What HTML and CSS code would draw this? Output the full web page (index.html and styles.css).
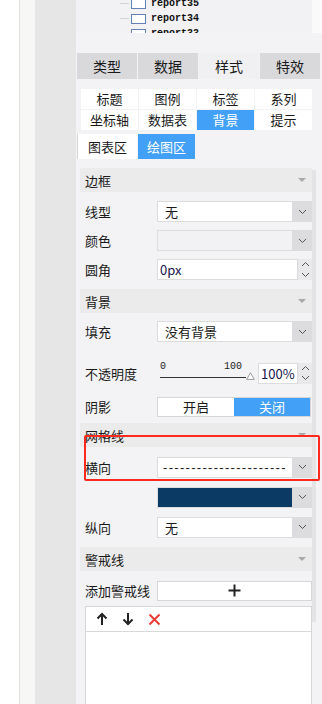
FILE: index.html
```html
<!DOCTYPE html>
<html lang="zh">
<head>
  <meta charset="UTF-8" />
  <title>图表样式</title>
  <link rel="stylesheet" href="styles.css">
</head>
<body>

  <div class="app">
    <div class="rail-a"></div>
    <div class="rail-b"></div>
    <div class="rail-c"></div>

    <div class="panel">
      <!-- report tree -->
      <div class="tree-wrap">
        <div class="tree">
          <div class="tree-item"><span class="tree-line"></span><span class="tree-icon"></span>report35</div>
          <div class="tree-item"><span class="tree-line"></span><span class="tree-icon"></span>report34</div>
          <div class="tree-item"><span class="tree-line"></span><span class="tree-icon"></span>report33</div>
        </div>
      </div>

      <!-- main tabs -->
      <div class="tabs">
        <div class="tab">类型</div>
        <div class="tab">数据</div>
        <div class="tab active">样式</div>
        <div class="tab">特效</div>
      </div>

      <div class="subtabs">
        <div class="subtab">标题</div>
        <div class="subtab">图例</div>
        <div class="subtab">标签</div>
        <div class="subtab">系列</div>
        <div class="subtab">坐标轴</div>
        <div class="subtab">数据表</div>
        <div class="subtab active">背景</div>
        <div class="subtab">提示</div>
      </div>

      <div class="areatabs">
        <div class="areatab first">图表区</div>
        <div class="areatab active">绘图区</div>
      </div>

      <div class="scroller">
        <div class="sections">

          <!-- 边框 -->
          <div class="sec-head">边框<span class="caret"></span></div>
          <div class="sec-body">
            <div class="row">
              <div class="label">线型</div>
              <div class="select">
                <div class="value">无</div>
                <div class="arrow"><svg width="9" height="6" viewBox="0 0 9 6"><path d="M1 1l3.5 3.5L8 1" fill="none" stroke="#555" stroke-width="1"/></svg></div>
              </div>
            </div>
            <div class="row">
              <div class="label">颜色</div>
              <div class="select disabled">
                <div class="value"></div>
                <div class="arrow"><svg width="9" height="6" viewBox="0 0 9 6"><path d="M1 1l3.5 3.5L8 1" fill="none" stroke="#555" stroke-width="1"/></svg></div>
              </div>
            </div>
            <div class="row">
              <div class="label">圆角</div>
              <div class="number">
                <div class="num-input">0px</div>
                <div class="spin">
                  <svg width="9" height="6" viewBox="0 0 9 6"><path d="M1 5l3.5-3.5L8 5" fill="none" stroke="#555" stroke-width="1"/></svg>
                  <svg width="9" height="6" viewBox="0 0 9 6"><path d="M1 1l3.5 3.5L8 1" fill="none" stroke="#555" stroke-width="1"/></svg>
                </div>
              </div>
            </div>
          </div>

          <!-- 背景 -->
          <div class="sec-head">背景<span class="caret"></span></div>
          <div class="sec-body bg-body">
            <div class="row">
              <div class="label">填充</div>
              <div class="select">
                <div class="value">没有背景</div>
                <div class="arrow"><svg width="9" height="6" viewBox="0 0 9 6"><path d="M1 1l3.5 3.5L8 1" fill="none" stroke="#555" stroke-width="1"/></svg></div>
              </div>
            </div>
            <div class="row row-opacity">
              <div class="label">不透明度</div>
              <div class="slider">
                <div class="slider-marks"><span>0</span><span>100</span></div>
                <div class="slider-track">
                  <span class="slider-line"></span>
                  <svg class="slider-thumb" width="9" height="8" viewBox="0 0 9 8"><path d="M4.5 0.8L8.3 7.4H0.7Z" fill="#fff" stroke="#999" stroke-width="1"/></svg>
                </div>
              </div>
              <div class="number small">
                <div class="num-input">100%</div>
                <div class="spin">
                  <svg width="9" height="6" viewBox="0 0 9 6"><path d="M1 5l3.5-3.5L8 5" fill="none" stroke="#555" stroke-width="1"/></svg>
                  <svg width="9" height="6" viewBox="0 0 9 6"><path d="M1 1l3.5 3.5L8 1" fill="none" stroke="#555" stroke-width="1"/></svg>
                </div>
              </div>
            </div>
            <div class="row">
              <div class="label">阴影</div>
              <div class="toggle">
                <div class="toggle-opt">开启</div>
                <div class="toggle-opt on">关闭</div>
              </div>
            </div>
          </div>

          <!-- 网格线 -->
          <div class="sec-head">网格线<span class="caret"></span></div>
          <div class="sec-body grid-body">
            <div class="row">
              <div class="label">横向</div>
              <div class="select">
                <div class="value dashes">----------------------</div>
                <div class="arrow"><svg width="9" height="6" viewBox="0 0 9 6"><path d="M1 1l3.5 3.5L8 1" fill="none" stroke="#555" stroke-width="1"/></svg></div>
              </div>
            </div>
            <div class="row">
              <div class="label"></div>
              <div class="select">
                <div class="value swatch"></div>
                <div class="arrow"><svg width="9" height="6" viewBox="0 0 9 6"><path d="M1 1l3.5 3.5L8 1" fill="none" stroke="#555" stroke-width="1"/></svg></div>
              </div>
            </div>
            <div class="row">
              <div class="label">纵向</div>
              <div class="select">
                <div class="value">无</div>
                <div class="arrow"><svg width="9" height="6" viewBox="0 0 9 6"><path d="M1 1l3.5 3.5L8 1" fill="none" stroke="#555" stroke-width="1"/></svg></div>
              </div>
            </div>
          </div>

          <!-- 警戒线 -->
          <div class="sec-head">警戒线<span class="caret"></span></div>
          <div class="sec-body alert-body">
            <div class="row">
              <div class="label">添加警戒线</div>
              <div class="add-btn"><svg width="13" height="13" viewBox="0 0 13 13"><path d="M6.5 0.5v12M0.5 6.5h12" stroke="#222" stroke-width="2"/></svg></div>
            </div>
            <div class="alert-list">
              <div class="alert-tools">
                <svg width="12" height="14" viewBox="0 0 12 14"><path d="M6 13V2M1.5 6.5L6 2l4.5 4.5" fill="none" stroke="#222" stroke-width="2"/></svg>
                <svg width="12" height="14" viewBox="0 0 12 14"><path d="M6 1v11M1.5 7.5L6 12l4.5-4.5" fill="none" stroke="#222" stroke-width="2"/></svg>
                <svg width="13" height="13" viewBox="0 0 13 13"><path d="M1.5 1.5l10 10M11.5 1.5l-10 10" stroke="#ee3d36" stroke-width="2"/></svg>
              </div>
            </div>
          </div>

        </div>
        <div class="scrollbar"><div class="thumb"></div></div>
      </div>
    </div>
  </div>

  <!-- annotation box -->
  <div class="highlight"></div>

</body>
</html>
```

FILE: styles.css
```css
body {
  margin: 0;
  height: 704px;
  overflow: hidden;
  background-color: #fff;
  font-family: "Noto Sans CJK SC", "Noto Sans", sans-serif;
  font-size: 13px;
  color: #1a1a1a;
  position: relative;
}
.app {
  display: flex;
  height: 704px;
}
.rail-a {
  width: 19px;
  background-color: #fff;
  border-right: 1px solid #e2e2de;
}
.rail-b {
  width: 15px;
  background-color: #f7f7f5;
}
.rail-c {
  width: 41px;
  background-color: #e6e6e6;
}
.panel {
  width: 246px;
  background-color: #f3f3f5;
  display: flex;
  flex-direction: column;
}

/* tree */
.tree-wrap {
  height: 33px;
  background-color: #fafafa;
}
.tree {
  width: 236px;
  height: 33px;
  overflow: hidden;
  background-color: #f2f2f4;
}
.tree-item {
  display: flex;
  align-items: center;
  height: 15px;
  margin-left: 44px;
  font-family: "Liberation Mono", monospace;
  font-size: 10px;
  font-weight: bold;
  color: #111;
}
.tree-item:first-child {
  margin-top: -4px;
}
.tree-line {
  width: 9px;
  height: 1px;
  background-color: #d4d4d4;
  margin-right: 2px;
}
.tree-icon {
  width: 13px;
  height: 8px;
  border: 1px solid #6482b8;
  background-color: #fff;
  margin-right: 5px;
}

/* tabs */
.tabs {
  display: flex;
  gap: 1px;
  margin-top: 20px;
  padding-left: 1px;
}
.tab {
  width: 60px;
  height: 26px;
  line-height: 26px;
  text-align: center;
  font-size: 14px;
  background-color: #d9d9dc;
}
.tab.active {
  background-color: #f0f0f2;
}
.subtabs {
  display: grid;
  grid-template-columns: repeat(4, 1fr);
  gap: 1px;
  width: 231px;
  margin: 10px 0 0 5px;
}
.subtab {
  height: 20px;
  line-height: 20px;
  text-align: center;
  background-color: #fff;
}
.subtab.active, .areatab.active {
  background-color: #42a0f6;
  color: #fff;
}
.areatabs {
  display: flex;
  gap: 1px;
  margin: 4px 0 0 1px;
}
.areatab {
  height: 25px;
  line-height: 25px;
  width: 57px;
  text-align: center;
  background-color: #fff;
}
.areatab.first {
  width: 59px;
  border-left: 1px solid #d6d6d6;
}

/* sections */
.scroller {
  display: flex;
  margin-top: 9px;
}
.sections {
  width: 232px;
  margin-left: 4px;
}
.scrollbar {
  width: 4px;
}
.thumb {
  margin-top: 2px;
  height: 452px;
  background-color: #e4e4e6;
}
.sec-head {
  display: flex;
  justify-content: space-between;
  align-items: center;
  height: 24px;
  padding: 0 6px 0 5px;
  background-color: #ebebeb;
}
.caret {
  width: 0;
  height: 0;
  border-left: 4px solid transparent;
  border-right: 4px solid transparent;
  border-top: 4px solid #a9a9a9;
}
.sec-body {
  padding: 5px 0;
}
.bg-body {
  padding: 4px 0 2px;
}
.grid-body {
  padding: 5px 0;
}
.grid-body .row {
  height: 30px;
}
.row {
  display: flex;
  align-items: center;
  height: 29px;
  padding-left: 5px;
}
.row-opacity {
  height: 38px;
  margin-top: 8px;
}
.label {
  width: 72px;
  flex-shrink: 0;
}
.select {
  flex: 1;
  display: flex;
  height: 19px;
  border: 1px solid #dcdcdc;
  border-right: none;
  background-color: #fff;
}
.select.disabled {
  background-color: #f2f2f4;
}
.value {
  flex: 1;
  padding-left: 7px;
  line-height: 19px;
}
.dashes {
  font-family: "Liberation Sans", sans-serif;
  letter-spacing: 1.3px;
  padding-left: 5px;
  overflow: hidden;
  white-space: nowrap;
}
.swatch {
  background-color: #0b3a64;
  padding: 0;
}
.arrow {
  width: 20px;
  display: flex;
  align-items: center;
  justify-content: center;
  background-color: #dcdcdf;
}
.number {
  flex: 1;
  display: flex;
  height: 21px;
}
.number.small {
  flex: 0 0 54px;
}
.num-input {
  flex: 1;
  border: 1px solid #dcdcdc;
  background-color: #fff;
  line-height: 19px;
  padding-left: 2px;
  color: #16164a;
}
.spin {
  width: 14px;
  display: flex;
  flex-direction: column;
  align-items: center;
  justify-content: space-around;
  background-color: #e9e9eb;
}

/* slider */
.slider {
  width: 98px;
  margin-right: 3px;
  align-self: flex-start;
  padding-top: 7px;
}
.slider-marks {
  display: flex;
  justify-content: space-between;
  width: 82px;
  padding-left: 3px;
  font-family: "Liberation Mono", monospace;
  font-size: 10px;
  line-height: 12px;
  color: #222;
}
.slider-track {
  display: flex;
  align-items: flex-end;
  height: 7px;
  padding-left: 3px;
}
.slider-line {
  width: 86px;
  height: 1px;
  background-color: #333;
  margin-bottom: 2px;
}

/* toggle */
.toggle {
  flex: 1;
  display: flex;
  height: 20px;
  margin-right: 1px;
  border: 1px solid #d6d6d6;
  box-sizing: border-box;
}
.toggle-opt {
  flex: 1;
  text-align: center;
  line-height: 18px;
  background-color: #fff;
}
.toggle-opt.on {
  background-color: #42a0f6;
  color: #fff;
}

/* 警戒线 */
.alert-body {
  padding: 5px 0 0;
}
.add-btn {
  flex: 1;
  height: 20px;
  display: flex;
  align-items: center;
  justify-content: center;
  background-color: #fff;
  border: 1px solid #d6d6d6;
  box-sizing: border-box;
}
.alert-list {
  margin: 1px 0 0 5px;
  height: 120px;
  border: 1px solid #d6d6d6;
  background-color: #fff;
}
.alert-tools {
  display: flex;
  align-items: center;
  gap: 14px;
  height: 24px;
  padding-left: 10px;
  border-bottom: 1px solid #d8d8d8;
}

/* red annotation frame */
.highlight {
  position: absolute;
  left: 84px;
  top: 435px;
  width: 232px;
  height: 42px;
  border: 2px solid #ff2a1f;
  border-radius: 2px;
}
```
